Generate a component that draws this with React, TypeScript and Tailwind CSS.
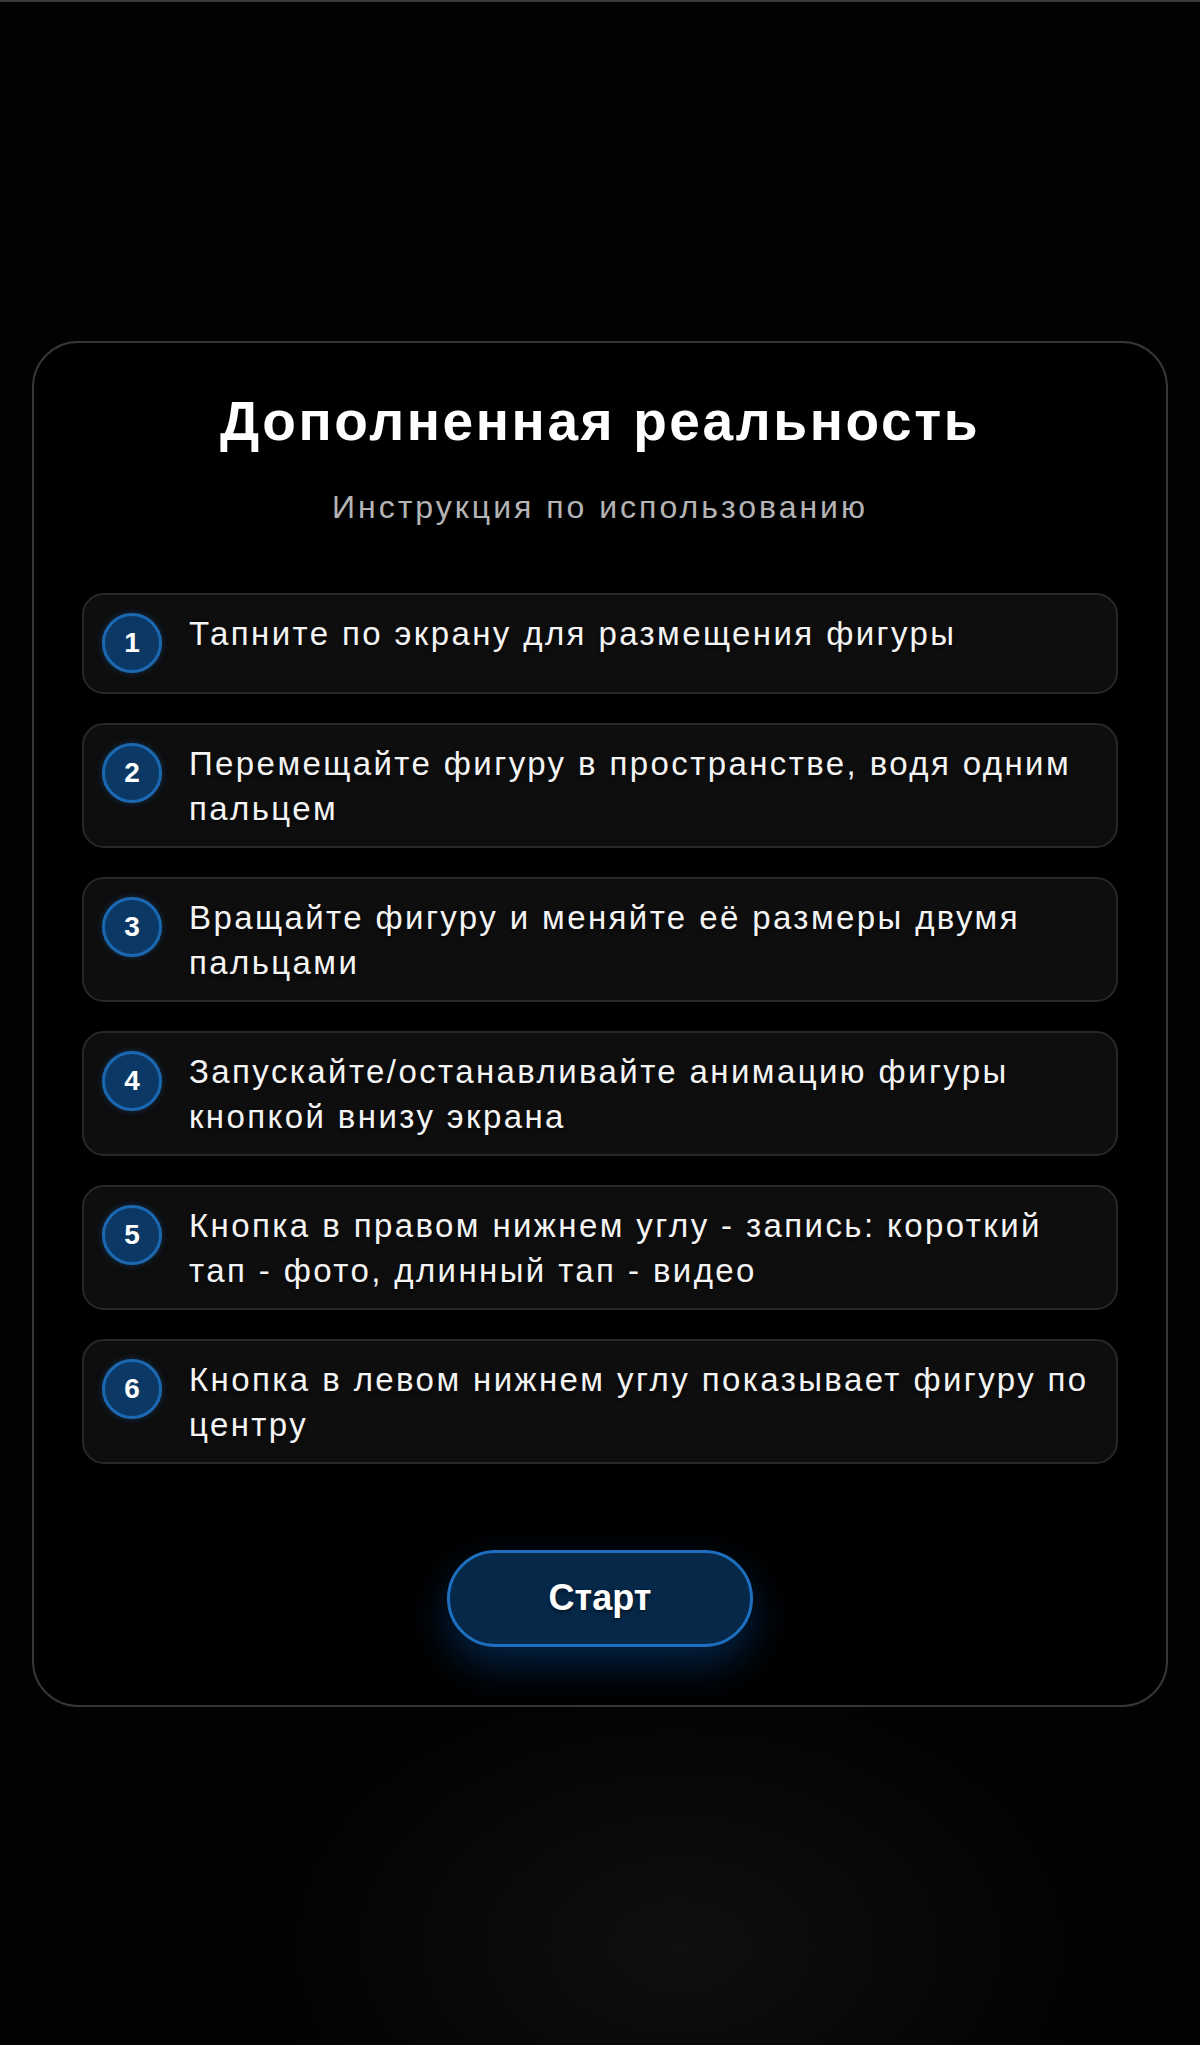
import React from "react";

const steps = [
  "Тапните по экрану для размещения фигуры",
  "Перемещайте фигуру в пространстве, водя одним пальцем",
  "Вращайте фигуру и меняйте её размеры двумя пальцами",
  "Запускайте/останавливайте анимацию фигуры кнопкой внизу экрана",
  "Кнопка в правом нижнем углу - запись: короткий тап - фото, длинный тап - видео",
  "Кнопка в левом нижнем углу показывает фигуру по центру",
];

export default function App() {
  return (
    <div
      className="relative min-h-screen w-full flex items-center justify-center bg-[#020203] border-t-2 border-[#3a3a3c] overflow-hidden"
      style={{ fontFamily: '"Liberation Sans", Arial, sans-serif' }}
    >
      <div className="pointer-events-none absolute left-[680px] bottom-[-200px] h-[600px] w-[900px] -translate-x-1/2 rounded-full bg-[radial-gradient(ellipse_at_center,rgba(40,40,40,0.35),rgba(0,0,0,0)_65%)]" />
      <div className="relative w-[1136px] rounded-[46px] border-2 border-[#363638] bg-black px-[48px] pt-[46px] pb-[58px] flex flex-col items-center">
        <h1 className="text-[55px] leading-[64px] font-bold text-white tracking-[2.6px] [text-shadow:0_2px_4px_rgba(0,0,0,0.6)]">
          Дополненная реальность
        </h1>
        <p className="mt-[34px] text-[32px] leading-[40px] text-[#b4b4b6] tracking-[3px]">
          Инструкция по использованию
        </p>
        <div className="mt-[66px] w-full flex flex-col gap-[29px]">
          {steps.map((s, i) => (
            <div
              key={i}
              className="min-h-[101px] flex items-start gap-[27px] rounded-[22px] border-2 border-[#28282a] bg-[#0e0e0f] pl-[18px] pr-[10px] pt-[16px] pb-[15px]"
            >
              <div className="mt-[2px] shrink-0 flex h-[60px] w-[60px] items-center justify-center rounded-full border-[3px] border-[#1b68b0] bg-[#0c3865] text-[28px] font-bold text-white shadow-[0_0_6px_rgba(30,110,190,0.35)]">
                {i + 1}
              </div>
              <p className="flex-1 text-[33px] leading-[45px] tracking-[2.4px] text-[#f4f4f4] [text-shadow:0_2px_4px_rgba(0,0,0,0.7)]">
                {s}
              </p>
            </div>
          ))}
        </div>
        <button className="mt-[86px] h-[97px] w-[306px] rounded-full border-[3px] border-[#1e6fc0] bg-[#06294a] text-[36px] font-bold text-white shadow-[0_18px_40px_rgba(10,100,200,0.35)] [text-shadow:0_2px_4px_rgba(0,0,0,0.6)]">
          Старт
        </button>
      </div>
    </div>
  );
}
